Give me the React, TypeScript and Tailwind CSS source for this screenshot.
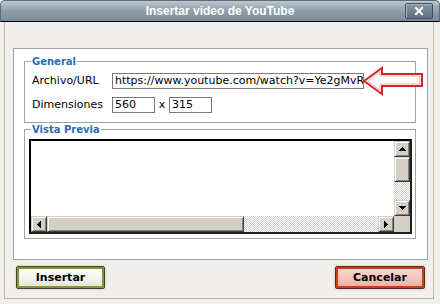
import { X } from "lucide-react";

type Dir = "up" | "down" | "left" | "right";

const tri: Record<Dir, { w: number; h: number; p: string }> = {
  up: { w: 7, h: 4, p: "0,4 3.5,0 7,4" },
  down: { w: 7, h: 4, p: "0,0 3.5,4 7,0" },
  left: { w: 4, h: 7, p: "4,0 0,3.5 4,7" },
  right: { w: 4, h: 7, p: "0,0 4,3.5 0,7" },
};

const raised =
  "bg-[#d4d0c8] border border-t-[#d4d0c8] border-l-[#d4d0c8] border-r-[#404040] border-b-[#404040] shadow-[inset_1px_1px_#ffffff,inset_-1px_-1px_#808080]";

const checker =
  "bg-[image:repeating-conic-gradient(#d4d0c8_0_25%,#ffffff_0_50%)] bg-[length:2px_2px]";

function ScrollBtn({ dir }: { dir: Dir }) {
  const t = tri[dir];
  return (
    <div className={`w-[16px] h-[16px] shrink-0 flex items-center justify-center ${raised}`}>
      <svg width={t.w} height={t.h} viewBox={`0 0 ${t.w} ${t.h}`} shapeRendering="crispEdges">
        <polygon points={t.p} fill="#000" />
      </svg>
    </div>
  );
}

function Legend({ children }: { children: string }) {
  return (
    <span className="absolute left-[6px] -top-[7px] bg-white px-[1px] text-[10px] leading-[13px] font-bold text-[#2b6cb8]">
      {children}
    </span>
  );
}

export default function App() {
  return (
    <div className="relative w-[440px] h-[304px] overflow-hidden bg-[#f0efeb] font-['DejaVu_Sans',sans-serif] text-[11px] text-black">
      {/* title bar */}
      <div className="relative h-[22px] rounded-t-[5px] border border-[#5d6e7b] border-b-black bg-linear-to-b from-[#bcc6ce] via-[#8e9eab] to-[#7a8b98] flex items-center justify-center">
        <span className="font-['Liberation_Sans',sans-serif] font-bold text-[12px] text-white leading-none">
          Insertar video de YouTube
        </span>
        <div className="absolute right-[6px] top-[2px] w-[28px] h-[16px] rounded-[2px] border border-[#3e4e5a] bg-linear-to-b from-[#8797a4] to-[#5f717f] shadow-[inset_1px_1px_#a9b6c0] flex items-center justify-center">
          <X size={12} strokeWidth={4} color="#ffffff" strokeLinecap="square" />
        </div>
      </div>

      {/* window frame */}
      <div className="ml-[4px] w-[430px] h-[277px] border-l border-r border-b border-[#c7b2a2] flex flex-col">
        <div className="mt-[26px] ml-[8px] w-[415px] h-[212px] bg-white border border-[#9ba4a8] flex flex-col">
          {/* General */}
          <div className="relative mt-[12px] ml-[10px] w-[392px] h-[62px] border border-[#a3a3a3] pt-[11px] pl-[7px]">
            <Legend>General</Legend>
            <div className="flex items-center h-[16px]">
              <span className="w-[80px]">Archivo/URL</span>
              <div className="w-[252px] h-[16px] border border-[#7a7a7a] px-[2px] leading-[14px] overflow-hidden whitespace-nowrap">
                https://www.youtube.com/watch?v=Ye2gMvR
              </div>
            </div>
            <div className="flex items-center h-[16px] mt-[8px]">
              <span className="w-[80px]">Dimensiones</span>
              <div className="w-[43px] h-[16px] border border-[#7a7a7a] px-[2px] leading-[14px]">560</div>
              <span className="w-[14px] text-center">x</span>
              <div className="w-[43px] h-[16px] border border-[#7a7a7a] px-[2px] leading-[14px]">315</div>
            </div>
          </div>

          {/* Vista Previa */}
          <div className="relative mt-[6px] ml-[10px] w-[392px] h-[110px] border border-[#a3a3a3] pt-[9px] pl-[4px]">
            <Legend>Vista Previa</Legend>
            <div className="w-[383px] h-[95px] border-2 border-t-black border-l-black border-r-[#202020] border-b-[#202020] bg-white flex flex-col">
              <div className="flex flex-1 min-h-0">
                <div className="flex-1" />
                <div className="w-[16px] flex flex-col">
                  <ScrollBtn dir="up" />
                  <div className={`h-[25px] ${raised}`} />
                  <div className={`flex-1 ${checker}`} />
                  <ScrollBtn dir="down" />
                </div>
              </div>
              <div className="flex h-[16px]">
                <ScrollBtn dir="left" />
                <div className={`w-[197px] ${raised}`} />
                <div className={`flex-1 ${checker}`} />
                <ScrollBtn dir="right" />
                <div className="w-[16px] bg-[#d4d0c8]" />
              </div>
            </div>
          </div>
        </div>

        {/* buttons */}
        <div className="mt-[6px] pl-[11px] pr-[8px] flex justify-between">
          <button className="w-[89px] h-[23px] rounded-[2px] border border-[#3f4426] shadow-[inset_0_0_0_2px_#86962a,0_0_3px_#c8c8c0] bg-linear-to-b from-[#ffffff] via-[#f4f4ee] to-[#e2e2d8] font-bold text-[11px] leading-none">
            Insertar
          </button>
          <button className="w-[90px] h-[23px] rounded-[2px] border border-[#5a2412] shadow-[inset_0_0_0_2px_#cf3c12,0_0_3px_#c8c8c0] bg-linear-to-b from-[#f9dcd4] via-[#f3c6bc] to-[#e9ada2] font-bold text-[11px] leading-none">
            Cancelar
          </button>
        </div>
      </div>

      {/* red arrow pointing at the URL field */}
      <svg
        width="62"
        height="30"
        viewBox="0 0 62 30"
        className="absolute left-[362px] top-[66px]"
      >
        <path
          d="M2 15 L20 2 L20 8 L60 8 L60 20 L20 20 L20 28 Z"
          fill="#ffffff"
          stroke="#d42828"
          strokeWidth="2"
        />
        <path
          d="M5.5 15 L18 6 L18 10 L58 10 L58 18 L18 18 L18 24 Z"
          fill="none"
          stroke="#f4b4b4"
          strokeWidth="1"
        />
      </svg>
    </div>
  );
}
